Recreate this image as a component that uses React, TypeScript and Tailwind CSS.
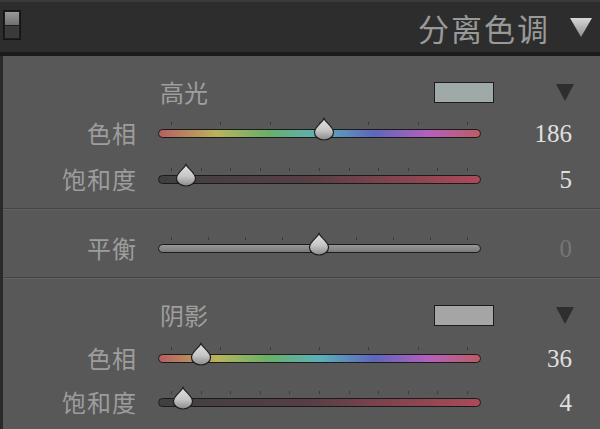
import React from 'react';

const cjk = "font-['Noto_Sans_CJK_SC',sans-serif]";

type SliderProps = {
  label: string;
  value: number;
  pos: number; // 0..1 along the tick range
  ticks: number;
  track: string;
  dim?: boolean;
  h?: string;
};

function Thumb({ pos }: { pos: number }) {
  // tick range inside the 323px track: 13px .. 309px
  const x = 13 + pos * 296;
  return (
    <svg
      width="24"
      height="24"
      viewBox="0 0 24 24"
      className="absolute top-[-12px]"
      style={{ left: x - 12 }}
    >
      <defs>
        <linearGradient id="thumbFill" x1="0" y1="0" x2="0" y2="1">
          <stop offset="0" stopColor="#e2e2e2" />
          <stop offset="0.55" stopColor="#c6c6c6" />
          <stop offset="1" stopColor="#8a8a8a" />
        </linearGradient>
      </defs>
      <path
        d="M12 1.5 C13.5 5.5 21.5 9.5 21.5 15.5 A9.5 7.5 0 0 1 2.5 15.5 C2.5 9.5 10.5 5.5 12 1.5 Z"
        fill="url(#thumbFill)"
        stroke="#1e1e1e"
        strokeWidth="1.2"
      />
    </svg>
  );
}

function SliderRow({ label, value, pos, ticks, track, dim, h = 'h-[46px]' }: SliderProps) {
  const marks = Array.from({ length: ticks }, (_, i) => 13 + (i * 296) / (ticks - 1));
  return (
    <div className={`flex items-center ${h}`}>
      <div className={`w-[134px] text-right text-[24px] leading-none tracking-[1px] text-[#9d9d9d] ${cjk}`}>
        {label}
      </div>
      <div className="relative ml-[21px] w-[323px] h-[9px]">
        {marks.map((m, i) => (
          <div key={i} className="absolute top-[-7px] w-px h-[3px] bg-[#3a3a3a]" style={{ left: m }} />
        ))}
        <div className={`h-full rounded-full border-[1.5px] border-[#1b1b1b] ${track}`} />
        <Thumb pos={pos} />
      </div>
      <div
        className={`w-[91px] text-right text-[25px] leading-none font-['Liberation_Serif',serif] ${
          dim ? 'text-[#767676]' : 'text-[#e0e0e0]'
        }`}
      >
        {value}
      </div>
    </div>
  );
}

function Heading({ title, swatch }: { title: string; swatch: string }) {
  return (
    <div className="flex items-center h-[28px]">
      <div className="w-[134px]" />
      <div className={`w-[297px] pl-[23px] text-[24px] leading-none text-[#9f9f9f] ${cjk}`}>{title}</div>
      <div className={`w-[60px] h-[21px] border-[1.5px] border-[#1c1c1c] ${swatch}`} />
      <svg width="18" height="18" viewBox="0 0 18 18" className="ml-[62px]">
        <polygon points="0,1 18,1 9,18" fill="#2e2e2e" />
      </svg>
    </div>
  );
}

const hue =
  'bg-[linear-gradient(to_right,#b85e60,#b8b45c_18%,#68b068_34%,#5cb0b8_50%,#5e66bc_67%,#b460bc_84%,#bc5c66)]';
const sat = 'bg-[linear-gradient(to_right,#404040,#553e44_45%,#ad4a58)]';
const bal = 'bg-[linear-gradient(to_bottom,#989898,#7a7a7a)]';

export default function App() {
  return (
    <div className="w-[600px] h-[429px] overflow-hidden flex flex-col bg-[#585858]">
      {/* header */}
      <div className="h-[56px] shrink-0 flex items-center bg-[#2d2d2d] border-t-2 border-t-[#3a3a3a] border-b-4 border-b-[#1b1b1b]">
        <div className="ml-[3px] mb-[4px] w-[18px] h-[30px] flex flex-col border border-[#141414] bg-[#1e1e1e] p-px gap-px">
          <div className="flex-1 bg-[linear-gradient(to_bottom,#9a9a9a,#707070)]" />
          <div className="flex-1 bg-[#3a3a3a]" />
        </div>
        <div className={`ml-auto text-[31px] leading-none tracking-[2px] text-[#999999] ${cjk}`}>分离色调</div>
        <svg width="22" height="20" viewBox="0 0 22 20" className="ml-[20px] mr-[8px]">
          <defs>
            <linearGradient id="hdrTri" x1="0" y1="0" x2="0" y2="1">
              <stop offset="0" stopColor="#d8d8d8" />
              <stop offset="1" stopColor="#8e8e8e" />
            </linearGradient>
          </defs>
          <polygon points="0,1 22,1 11,20" fill="url(#hdrTri)" />
        </svg>
      </div>

      <div className="flex-1 flex">
        <div className="w-[3px] bg-[#2a2a2a]" />
        <div className="flex-1 flex flex-col">
          {/* highlights */}
          <div className="pt-[22px] pb-[6px]">
            <Heading title="高光" swatch="bg-[#9fa9a8]" />
            <div className="mt-[4px]">
              <SliderRow label="色相" value={186} pos={186 / 360} ticks={7} track={hue} />
              <SliderRow label="饱和度" value={5} pos={0.05} ticks={11} track={sat} />
            </div>
          </div>
          <div className="h-[2px] border-t border-t-[#444444] border-b border-b-[#626262]" />

          {/* balance */}
          <div className="pt-[15px] pb-[6px]">
            <SliderRow label="平衡" value={0} pos={0.5} ticks={9} track={bal} dim />
          </div>
          <div className="h-[2px] border-t border-t-[#444444] border-b border-b-[#626262]" />

          {/* shadows */}
          <div className="pt-[22px]">
            <Heading title="阴影" swatch="bg-[#a5a5a5]" />
            <div className="mt-[7px]">
              <SliderRow label="色相" value={36} pos={36 / 360} ticks={7} track={hue} h="h-[44px]" />
              <SliderRow label="饱和度" value={4} pos={0.04} ticks={11} track={sat} h="h-[44px]" />
            </div>
          </div>
        </div>
      </div>
    </div>
  );
}
